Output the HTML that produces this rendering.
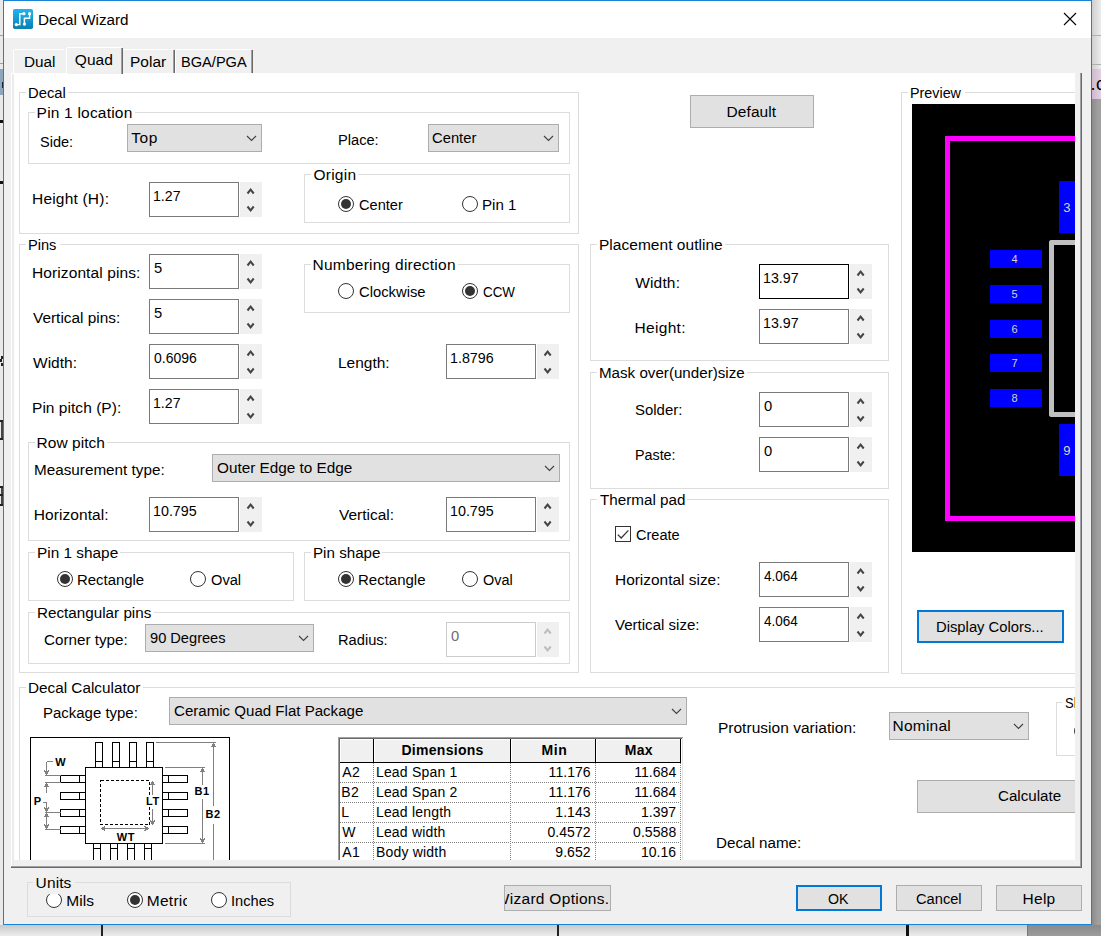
<!DOCTYPE html>
<html lang="en"><head><meta charset="utf-8"><title>Decal Wizard</title><style>
html,body{margin:0;padding:0;}
body{width:1101px;height:936px;overflow:hidden;position:relative;background:#fff;font-family:"Liberation Sans",sans-serif;}
div,span.t,svg.a{position:absolute;box-sizing:content-box;}
span.t{white-space:pre;display:block;transform-origin:0 0;}
.r{width:14px;height:14px;border:1px solid #333;border-radius:50%;background:#fff;}
.r i{position:absolute;left:2px;top:2px;width:10px;height:10px;border-radius:50%;background:#333;display:block;}
.cb{width:14px;height:14px;border:1px solid #333;background:#fff;}
.cb svg{position:absolute;left:0;top:0;}
</style></head>
<body>
<div style="left:0px;top:0px;width:4px;height:936px;background:#e9e9e9;"></div>
<div style="left:0px;top:35px;width:4px;height:1px;background:#a0a0a0;"></div>
<div style="left:0px;top:63px;width:4px;height:1px;background:#a0a0a0;"></div>
<div style="left:0px;top:69px;width:4px;height:26px;background:#8ea5be;"></div>
<div style="left:2px;top:82px;width:2px;height:6px;background:#1a2430;"></div>
<div style="left:0px;top:120px;width:4px;height:3px;background:#111;"></div>
<div style="left:0px;top:181px;width:4px;height:3px;background:#111;"></div>
<div style="left:1px;top:356px;width:2px;height:3px;background:#222;"></div>
<div style="left:0px;top:359px;width:2px;height:3px;background:#222;"></div>
<div style="left:1px;top:363px;width:2px;height:3px;background:#222;"></div>
<div style="left:0px;top:420px;width:3px;height:2px;background:#222;"></div>
<div style="left:1px;top:422px;width:2px;height:16px;background:#444;"></div>
<div style="left:0px;top:438px;width:3px;height:2px;background:#222;"></div>
<div style="left:0px;top:486px;width:3px;height:2px;background:#222;"></div>
<div style="left:1px;top:488px;width:2px;height:6px;background:#444;"></div>
<div style="left:0px;top:494px;width:3px;height:2px;background:#222;"></div>
<div style="left:1px;top:496px;width:2px;height:8px;background:#444;"></div>
<div style="left:0px;top:504px;width:3px;height:2px;background:#222;"></div>
<div style="left:1092px;top:0px;width:9px;height:936px;background:linear-gradient(90deg,#8c8c8c,#a0a0a0 70%);"></div>
<div style="left:1092px;top:0px;width:9px;height:35px;background:linear-gradient(90deg,#cfcfcf,#ededed);"></div>
<div style="left:1092px;top:35px;width:9px;height:29px;background:linear-gradient(90deg,#cfcfcf,#ededed);border-top:1px solid #b0b0b0;"></div>
<div style="left:1092px;top:64px;width:9px;height:4px;background:linear-gradient(90deg,#cfcfcf,#ededed);border-top:1px solid #b0b0b0;"></div>
<div style="left:1092px;top:69px;width:9px;height:30px;background:linear-gradient(90deg,#cdb9cd,#e4d2e4);"></div>
<span class="t" style="left:1090.4px;top:73px;font-size:18px;line-height:23px;color:#000;letter-spacing:0.5px;">.c</span>
<div style="left:0px;top:925px;width:1101px;height:11px;background:linear-gradient(180deg,#c9c9c9,#ececec);"></div>
<div style="left:1028px;top:925px;width:73px;height:11px;background:linear-gradient(180deg,#8a8a8a,#9c9c9c);"></div>
<div style="left:1027px;top:925px;width:1px;height:11px;background:#777;"></div>
<div style="left:101px;top:925px;width:2px;height:11px;background:#222;"></div>
<div style="left:557px;top:925px;width:2px;height:11px;background:#222;"></div>
<div style="left:906px;top:925px;width:3px;height:11px;background:#111;"></div>
<div style="left:3px;top:0px;width:1087px;height:923px;border:1px solid #1883d7;background:#f0f0f0;"></div>
<div style="left:4px;top:1px;width:1087px;height:37px;background:#fff;"></div>
<svg class="a" style="left:13px;top:9px" width="20" height="20" viewBox="0 0 20 20"><defs><linearGradient id="ig" x1="0" y1="0" x2="0" y2="1"><stop offset="0" stop-color="#1fb4f2"/><stop offset="1" stop-color="#0a80b0"/></linearGradient></defs><rect width="20" height="20" rx="1.8" fill="url(#ig)"/><path d="M3.3 15.6 H6.8 V4.7 H10.9 M11.4 15.1 V9.3 H16.6 V4.7" fill="none" stroke="#fff" stroke-width="1.45"/><circle cx="3.3" cy="15.6" r="1.6" fill="#fff"/><circle cx="10.9" cy="4.7" r="1.6" fill="#fff"/><circle cx="11.4" cy="15.1" r="1.6" fill="#fff"/><circle cx="16.6" cy="4.7" r="1.6" fill="#fff"/></svg>
<span class="t" style="left:38.0px;top:10px;font-size:15.5px;line-height:20px;color:#000;transform:scaleX(0.9829);">Decal Wizard</span>
<svg class="a" style="left:1063px;top:12px" width="14" height="14" viewBox="0 0 14 14"><path d="M1 1 L13 13 M13 1 L1 13" stroke="#000" stroke-width="1.1" fill="none"/></svg>
<div style="left:11px;top:73px;width:1071px;height:795px;background:#f0f0f0;"></div>
<div style="left:11px;top:73px;width:1064px;height:787px;background:#fff;"></div>
<div style="left:11px;top:73px;width:1px;height:793px;background:#fff;"></div>
<div style="left:12px;top:74px;width:2px;height:792px;background:#ebebeb;"></div>
<div style="left:1080px;top:73px;width:1px;height:795px;background:#a0a0a0;"></div>
<div style="left:1081px;top:73px;width:1px;height:795px;background:#696969;"></div>
<div style="left:11px;top:866px;width:1070px;height:1px;background:#a0a0a0;"></div>
<div style="left:11px;top:867px;width:1071px;height:1px;background:#696969;"></div>
<div style="left:13px;top:49px;width:53px;height:24px;background:#f0f0f0;"></div>
<div style="left:13px;top:50px;width:1px;height:23px;background:#fff;"></div>
<div style="left:14px;top:49px;width:50px;height:1px;background:#fff;"></div>
<span class="t" style="left:24.2px;top:52px;font-size:15.5px;line-height:20px;color:#000;transform:scaleX(0.9886);">Dual</span>
<div style="left:122px;top:49px;width:53px;height:24px;background:#f0f0f0;"></div>
<div style="left:123px;top:49px;width:50px;height:1px;background:#fff;"></div>
<div style="left:173px;top:50px;width:1px;height:23px;background:#a0a0a0;"></div>
<div style="left:174px;top:50px;width:1px;height:23px;background:#696969;"></div>
<span class="t" style="left:130.0px;top:52px;font-size:15.5px;line-height:20px;color:#000;transform:scaleX(0.9993);">Polar</span>
<div style="left:175px;top:49px;width:78px;height:24px;background:#f0f0f0;"></div>
<div style="left:175px;top:50px;width:1px;height:23px;background:#fff;"></div>
<div style="left:176px;top:49px;width:75px;height:1px;background:#fff;"></div>
<div style="left:251px;top:50px;width:1px;height:23px;background:#a0a0a0;"></div>
<div style="left:252px;top:50px;width:1px;height:23px;background:#696969;"></div>
<span class="t" style="left:180.7px;top:52px;font-size:15.5px;line-height:20px;color:#000;transform:scaleX(0.9418);">BGA/PGA</span>
<div style="left:66px;top:47px;width:57px;height:27px;background:#f0f0f0;"></div>
<div style="left:66px;top:48px;width:1px;height:26px;background:#fff;"></div>
<div style="left:67px;top:47px;width:54px;height:1px;background:#fff;"></div>
<div style="left:121px;top:48px;width:1px;height:26px;background:#a0a0a0;"></div>
<div style="left:122px;top:48px;width:1px;height:26px;background:#696969;"></div>
<span class="t" style="left:74.8px;top:50px;font-size:15.5px;line-height:20px;color:#000;letter-spacing:0.07px;">Quad</span>
<div id="pg" style="left:0;top:0;width:1075px;height:860px;overflow:hidden;">
<div style="left:19px;top:92px;width:558px;height:140px;border:1px solid #dcdcdc;"></div>
<div style="left:26px;top:84px;width:42.400000000000006px;height:16px;background:#fff;"></div>
<span class="t" style="left:28.0px;top:83px;font-size:15.5px;line-height:20px;color:#000;transform:scaleX(0.953);">Decal</span>
<div style="left:28px;top:112px;width:540px;height:50px;border:1px solid #dcdcdc;"></div>
<div style="left:34.6px;top:104px;width:100.0px;height:16px;background:#fff;"></div>
<span class="t" style="left:36.6px;top:103px;font-size:15.5px;line-height:20px;color:#000;letter-spacing:0.2px;">Pin 1 location</span>
<span class="t" style="left:39.5px;top:132px;font-size:15.5px;line-height:20px;color:#000;transform:scaleX(0.9372);">Side:</span>
<div style="left:127px;top:124px;width:133px;height:26px;border:1px solid #adadad;background:#e1e1e1;"></div>
<svg class="a" style="left:246px;top:135px" width="11" height="7" viewBox="0 0 11 7"><path d="M1 1 L5.5 5.5 L10 1" fill="none" stroke="#404040" stroke-width="1.1"/></svg>
<span class="t" style="left:131.2px;top:128px;font-size:15.5px;line-height:20px;color:#000;letter-spacing:0.56px;">Top</span>
<span class="t" style="left:337.8px;top:130px;font-size:15.5px;line-height:20px;color:#000;transform:scaleX(0.9439);">Place:</span>
<div style="left:428px;top:124px;width:129px;height:26px;border:1px solid #adadad;background:#e1e1e1;"></div>
<svg class="a" style="left:543px;top:135px" width="11" height="7" viewBox="0 0 11 7"><path d="M1 1 L5.5 5.5 L10 1" fill="none" stroke="#404040" stroke-width="1.1"/></svg>
<span class="t" style="left:432.4px;top:128px;font-size:15.5px;line-height:20px;color:#000;transform:scaleX(0.9532);">Center</span>
<span class="t" style="left:32.0px;top:189px;font-size:15.5px;line-height:20px;color:#000;letter-spacing:0.2px;">Height (H):</span>
<div style="left:149px;top:182px;width:88px;height:33px;border:1px solid #7a7a7a;background:#fff;"></div>
<div style="left:240px;top:182px;width:22px;height:35px;background:#f0f0f0;"></div>
<svg class="a" style="left:240px;top:182px" width="22" height="35" viewBox="0 0 22 35"><path d="M7.5 11.5 L10.6 7.7 L13.7 11.5" fill="none" stroke="#444" stroke-width="2"/><path d="M7.5 24.5 L10.6 28.3 L13.7 24.5" fill="none" stroke="#444" stroke-width="2"/></svg>
<span class="t" style="left:153.3px;top:186px;font-size:15.5px;line-height:20px;color:#000;transform:scaleX(0.912);">1.27</span>
<div style="left:304px;top:174px;width:264px;height:47px;border:1px solid #dcdcdc;"></div>
<div style="left:310.5px;top:166px;width:47.89999999999998px;height:16px;background:#fff;"></div>
<span class="t" style="left:313.5px;top:165px;font-size:15.5px;line-height:20px;color:#000;letter-spacing:0.23px;">Origin</span>
<div class="r" style="left:338px;top:196px;background:#fff"><i></i></div>
<span class="t" style="left:358.9px;top:195px;font-size:15.5px;line-height:20px;color:#000;transform:scaleX(0.9403);">Center</span>
<div class="r" style="left:462px;top:196px;background:#fff"></div>
<span class="t" style="left:482.3px;top:195px;font-size:15.5px;line-height:20px;color:#000;transform:scaleX(0.9756);">Pin 1</span>
<div style="left:19px;top:244px;width:558px;height:427px;border:1px solid #dcdcdc;"></div>
<div style="left:26px;top:236px;width:33.7px;height:16px;background:#fff;"></div>
<span class="t" style="left:28.1px;top:235px;font-size:15.5px;line-height:20px;color:#000;transform:scaleX(0.942);">Pins</span>
<span class="t" style="left:32.0px;top:263px;font-size:15.5px;line-height:20px;color:#000;letter-spacing:0.1px;">Horizontal pins:</span>
<div style="left:149px;top:254px;width:88px;height:33px;border:1px solid #7a7a7a;background:#fff;"></div>
<div style="left:240px;top:254px;width:22px;height:35px;background:#f0f0f0;"></div>
<svg class="a" style="left:240px;top:254px" width="22" height="35" viewBox="0 0 22 35"><path d="M7.5 11.5 L10.6 7.7 L13.7 11.5" fill="none" stroke="#444" stroke-width="2"/><path d="M7.5 24.5 L10.6 28.3 L13.7 24.5" fill="none" stroke="#444" stroke-width="2"/></svg>
<span class="t" style="left:154.2px;top:258px;font-size:15.5px;line-height:20px;color:#000;transform:scaleX(0.95);">5</span>
<span class="t" style="left:33.0px;top:308px;font-size:15.5px;line-height:20px;color:#000;transform:scaleX(0.9933);">Vertical pins:</span>
<div style="left:149px;top:299px;width:88px;height:33px;border:1px solid #7a7a7a;background:#fff;"></div>
<div style="left:240px;top:299px;width:22px;height:35px;background:#f0f0f0;"></div>
<svg class="a" style="left:240px;top:299px" width="22" height="35" viewBox="0 0 22 35"><path d="M7.5 11.5 L10.6 7.7 L13.7 11.5" fill="none" stroke="#444" stroke-width="2"/><path d="M7.5 24.5 L10.6 28.3 L13.7 24.5" fill="none" stroke="#444" stroke-width="2"/></svg>
<span class="t" style="left:154.2px;top:303px;font-size:15.5px;line-height:20px;color:#000;transform:scaleX(0.95);">5</span>
<span class="t" style="left:33.0px;top:353px;font-size:15.5px;line-height:20px;color:#000;letter-spacing:0.01px;">Width:</span>
<div style="left:149px;top:344px;width:88px;height:33px;border:1px solid #7a7a7a;background:#fff;"></div>
<div style="left:240px;top:344px;width:22px;height:35px;background:#f0f0f0;"></div>
<svg class="a" style="left:240px;top:344px" width="22" height="35" viewBox="0 0 22 35"><path d="M7.5 11.5 L10.6 7.7 L13.7 11.5" fill="none" stroke="#444" stroke-width="2"/><path d="M7.5 24.5 L10.6 28.3 L13.7 24.5" fill="none" stroke="#444" stroke-width="2"/></svg>
<span class="t" style="left:154.2px;top:348px;font-size:15.5px;line-height:20px;color:#000;transform:scaleX(0.9017);">0.6096</span>
<span class="t" style="left:32.0px;top:398px;font-size:15.5px;line-height:20px;color:#000;letter-spacing:0.04px;">Pin pitch (P):</span>
<div style="left:149px;top:389px;width:88px;height:33px;border:1px solid #7a7a7a;background:#fff;"></div>
<div style="left:240px;top:389px;width:22px;height:35px;background:#f0f0f0;"></div>
<svg class="a" style="left:240px;top:389px" width="22" height="35" viewBox="0 0 22 35"><path d="M7.5 11.5 L10.6 7.7 L13.7 11.5" fill="none" stroke="#444" stroke-width="2"/><path d="M7.5 24.5 L10.6 28.3 L13.7 24.5" fill="none" stroke="#444" stroke-width="2"/></svg>
<span class="t" style="left:153.3px;top:393px;font-size:15.5px;line-height:20px;color:#000;transform:scaleX(0.912);">1.27</span>
<div style="left:304px;top:264px;width:264px;height:47px;border:1px solid #dcdcdc;"></div>
<div style="left:310.5px;top:256px;width:147.39999999999998px;height:16px;background:#fff;"></div>
<span class="t" style="left:312.5px;top:255px;font-size:15.5px;line-height:20px;color:#000;letter-spacing:0.24px;">Numbering direction</span>
<div class="r" style="left:338px;top:283px;background:#fff"></div>
<span class="t" style="left:358.9px;top:282px;font-size:15.5px;line-height:20px;color:#000;transform:scaleX(0.9545);">Clockwise</span>
<div class="r" style="left:462px;top:283px;background:#fff"><i></i></div>
<span class="t" style="left:483.3px;top:282px;font-size:15.5px;line-height:20px;color:#000;transform:scaleX(0.8636);">CCW</span>
<span class="t" style="left:337.7px;top:353px;font-size:15.5px;line-height:20px;color:#000;transform:scaleX(0.9977);">Length:</span>
<div style="left:446px;top:344px;width:88px;height:33px;border:1px solid #7a7a7a;background:#fff;"></div>
<div style="left:537px;top:344px;width:22px;height:35px;background:#f0f0f0;"></div>
<svg class="a" style="left:537px;top:344px" width="22" height="35" viewBox="0 0 22 35"><path d="M7.5 11.5 L10.6 7.7 L13.7 11.5" fill="none" stroke="#444" stroke-width="2"/><path d="M7.5 24.5 L10.6 28.3 L13.7 24.5" fill="none" stroke="#444" stroke-width="2"/></svg>
<span class="t" style="left:450.3px;top:348px;font-size:15.5px;line-height:20px;color:#000;transform:scaleX(0.9214);">1.8796</span>
<div style="left:28px;top:442px;width:540px;height:97px;border:1px solid #dcdcdc;"></div>
<div style="left:34.6px;top:434px;width:72.80000000000001px;height:16px;background:#fff;"></div>
<span class="t" style="left:36.6px;top:433px;font-size:15.5px;line-height:20px;color:#000;letter-spacing:0.04px;">Row pitch</span>
<span class="t" style="left:33.8px;top:460px;font-size:15.5px;line-height:20px;color:#000;transform:scaleX(0.9848);">Measurement type:</span>
<div style="left:212px;top:454px;width:346px;height:26px;border:1px solid #adadad;background:#e1e1e1;"></div>
<svg class="a" style="left:544px;top:465px" width="11" height="7" viewBox="0 0 11 7"><path d="M1 1 L5.5 5.5 L10 1" fill="none" stroke="#404040" stroke-width="1.1"/></svg>
<span class="t" style="left:216.8px;top:458px;font-size:15.5px;line-height:20px;color:#000;transform:scaleX(0.9876);">Outer Edge to Edge</span>
<span class="t" style="left:33.8px;top:505px;font-size:15.5px;line-height:20px;color:#000;letter-spacing:0.06px;">Horizontal:</span>
<div style="left:149px;top:497px;width:88px;height:33px;border:1px solid #7a7a7a;background:#fff;"></div>
<div style="left:240px;top:497px;width:22px;height:35px;background:#f0f0f0;"></div>
<svg class="a" style="left:240px;top:497px" width="22" height="35" viewBox="0 0 22 35"><path d="M7.5 11.5 L10.6 7.7 L13.7 11.5" fill="none" stroke="#444" stroke-width="2"/><path d="M7.5 24.5 L10.6 28.3 L13.7 24.5" fill="none" stroke="#444" stroke-width="2"/></svg>
<span class="t" style="left:153.3px;top:501px;font-size:15.5px;line-height:20px;color:#000;transform:scaleX(0.9214);">10.795</span>
<span class="t" style="left:338.5px;top:505px;font-size:15.5px;line-height:20px;color:#000;transform:scaleX(0.9975);">Vertical:</span>
<div style="left:446px;top:497px;width:88px;height:33px;border:1px solid #7a7a7a;background:#fff;"></div>
<div style="left:537px;top:497px;width:22px;height:35px;background:#f0f0f0;"></div>
<svg class="a" style="left:537px;top:497px" width="22" height="35" viewBox="0 0 22 35"><path d="M7.5 11.5 L10.6 7.7 L13.7 11.5" fill="none" stroke="#444" stroke-width="2"/><path d="M7.5 24.5 L10.6 28.3 L13.7 24.5" fill="none" stroke="#444" stroke-width="2"/></svg>
<span class="t" style="left:450.3px;top:501px;font-size:15.5px;line-height:20px;color:#000;transform:scaleX(0.9214);">10.795</span>
<div style="left:28px;top:552px;width:264px;height:47px;border:1px solid #dcdcdc;"></div>
<div style="left:34.6px;top:544px;width:85.6px;height:16px;background:#fff;"></div>
<span class="t" style="left:36.6px;top:543px;font-size:15.5px;line-height:20px;color:#000;transform:scaleX(0.9918);">Pin 1 shape</span>
<div class="r" style="left:57px;top:571px;background:#fff"><i></i></div>
<span class="t" style="left:77.0px;top:570px;font-size:15.5px;line-height:20px;color:#000;transform:scaleX(0.9622);">Rectangle</span>
<div class="r" style="left:190px;top:571px;background:#fff"></div>
<span class="t" style="left:210.6px;top:570px;font-size:15.5px;line-height:20px;color:#000;transform:scaleX(0.9449);">Oval</span>
<div style="left:304px;top:552px;width:264px;height:47px;border:1px solid #dcdcdc;"></div>
<div style="left:310.5px;top:544px;width:71.89999999999998px;height:16px;background:#fff;"></div>
<span class="t" style="left:312.5px;top:543px;font-size:15.5px;line-height:20px;color:#000;transform:scaleX(0.9787);">Pin shape</span>
<div class="r" style="left:338px;top:571px;background:#fff"><i></i></div>
<span class="t" style="left:358.0px;top:570px;font-size:15.5px;line-height:20px;color:#000;transform:scaleX(0.9666);">Rectangle</span>
<div class="r" style="left:462px;top:571px;background:#fff"></div>
<span class="t" style="left:483.3px;top:570px;font-size:15.5px;line-height:20px;color:#000;transform:scaleX(0.9322);">Oval</span>
<div style="left:28px;top:612px;width:540px;height:50px;border:1px solid #dcdcdc;"></div>
<div style="left:34.6px;top:604px;width:119.6px;height:16px;background:#fff;"></div>
<span class="t" style="left:36.6px;top:603px;font-size:15.5px;line-height:20px;color:#000;transform:scaleX(0.9829);">Rectangular pins</span>
<span class="t" style="left:43.8px;top:630px;font-size:15.5px;line-height:20px;color:#000;transform:scaleX(0.9811);">Corner type:</span>
<div style="left:145px;top:624px;width:167px;height:26px;border:1px solid #adadad;background:#e1e1e1;"></div>
<svg class="a" style="left:298px;top:635px" width="11" height="7" viewBox="0 0 11 7"><path d="M1 1 L5.5 5.5 L10 1" fill="none" stroke="#404040" stroke-width="1.1"/></svg>
<span class="t" style="left:149.5px;top:628px;font-size:15.5px;line-height:20px;color:#000;transform:scaleX(0.9429);">90 Degrees</span>
<span class="t" style="left:337.8px;top:630px;font-size:15.5px;line-height:20px;color:#000;transform:scaleX(0.9452);">Radius:</span>
<div style="left:446px;top:622px;width:88px;height:33px;border:1px solid #ccc;background:#fff;"></div>
<div style="left:537px;top:622px;width:22px;height:35px;background:#f0f0f0;"></div>
<svg class="a" style="left:537px;top:622px" width="22" height="35" viewBox="0 0 22 35"><path d="M7.5 11.5 L10.6 7.7 L13.7 11.5" fill="none" stroke="#bdbdbd" stroke-width="2"/><path d="M7.5 24.5 L10.6 28.3 L13.7 24.5" fill="none" stroke="#bdbdbd" stroke-width="2"/></svg>
<span class="t" style="left:451.2px;top:626px;font-size:15.5px;line-height:20px;color:#6d6d6d;transform:scaleX(0.95);">0</span>
<div style="left:690px;top:95px;width:122px;height:31px;border:1px solid #adadad;background:#e1e1e1;"></div>
<span class="t" style="left:726.6px;top:102px;font-size:15.5px;line-height:20px;color:#000;letter-spacing:0.06px;">Default</span>
<div style="left:590px;top:244px;width:297px;height:115px;border:1px solid #dcdcdc;"></div>
<div style="left:597px;top:236px;width:128px;height:16px;background:#fff;"></div>
<span class="t" style="left:599.0px;top:235px;font-size:15.5px;line-height:20px;color:#000;letter-spacing:0.03px;">Placement outline</span>
<span class="t" style="left:635.2px;top:273px;font-size:15.5px;line-height:20px;color:#000;letter-spacing:0.17px;">Width:</span>
<div style="left:759px;top:264px;width:88px;height:33px;border:1px solid #000;background:#fff;"></div>
<div style="left:850px;top:264px;width:22px;height:35px;background:#f0f0f0;"></div>
<svg class="a" style="left:850px;top:264px" width="22" height="35" viewBox="0 0 22 35"><path d="M7.5 11.5 L10.6 7.7 L13.7 11.5" fill="none" stroke="#444" stroke-width="2"/><path d="M7.5 24.5 L10.6 28.3 L13.7 24.5" fill="none" stroke="#444" stroke-width="2"/></svg>
<span class="t" style="left:763.3px;top:268px;font-size:15.5px;line-height:20px;color:#000;transform:scaleX(0.9178);">13.97</span>
<span class="t" style="left:634.6px;top:318px;font-size:15.5px;line-height:20px;color:#000;letter-spacing:0.3px;">Height:</span>
<div style="left:759px;top:309px;width:88px;height:33px;border:1px solid #7a7a7a;background:#fff;"></div>
<div style="left:850px;top:309px;width:22px;height:35px;background:#f0f0f0;"></div>
<svg class="a" style="left:850px;top:309px" width="22" height="35" viewBox="0 0 22 35"><path d="M7.5 11.5 L10.6 7.7 L13.7 11.5" fill="none" stroke="#444" stroke-width="2"/><path d="M7.5 24.5 L10.6 28.3 L13.7 24.5" fill="none" stroke="#444" stroke-width="2"/></svg>
<span class="t" style="left:763.3px;top:313px;font-size:15.5px;line-height:20px;color:#000;transform:scaleX(0.9178);">13.97</span>
<div style="left:590px;top:372px;width:297px;height:115px;border:1px solid #dcdcdc;"></div>
<div style="left:597px;top:364px;width:150.10000000000002px;height:16px;background:#fff;"></div>
<span class="t" style="left:599.0px;top:363px;font-size:15.5px;line-height:20px;color:#000;transform:scaleX(0.9775);">Mask over(under)size</span>
<span class="t" style="left:635.4px;top:400px;font-size:15.5px;line-height:20px;color:#000;transform:scaleX(0.9641);">Solder:</span>
<div style="left:759px;top:392px;width:88px;height:33px;border:1px solid #7a7a7a;background:#fff;"></div>
<div style="left:850px;top:392px;width:22px;height:35px;background:#f0f0f0;"></div>
<svg class="a" style="left:850px;top:392px" width="22" height="35" viewBox="0 0 22 35"><path d="M7.5 11.5 L10.6 7.7 L13.7 11.5" fill="none" stroke="#444" stroke-width="2"/><path d="M7.5 24.5 L10.6 28.3 L13.7 24.5" fill="none" stroke="#444" stroke-width="2"/></svg>
<span class="t" style="left:764.2px;top:396px;font-size:15.5px;line-height:20px;color:#000;transform:scaleX(0.95);">0</span>
<span class="t" style="left:634.7px;top:445px;font-size:15.5px;line-height:20px;color:#000;transform:scaleX(0.922);">Paste:</span>
<div style="left:759px;top:437px;width:88px;height:33px;border:1px solid #7a7a7a;background:#fff;"></div>
<div style="left:850px;top:437px;width:22px;height:35px;background:#f0f0f0;"></div>
<svg class="a" style="left:850px;top:437px" width="22" height="35" viewBox="0 0 22 35"><path d="M7.5 11.5 L10.6 7.7 L13.7 11.5" fill="none" stroke="#444" stroke-width="2"/><path d="M7.5 24.5 L10.6 28.3 L13.7 24.5" fill="none" stroke="#444" stroke-width="2"/></svg>
<span class="t" style="left:764.2px;top:441px;font-size:15.5px;line-height:20px;color:#000;transform:scaleX(0.95);">0</span>
<div style="left:590px;top:499px;width:297px;height:172px;border:1px solid #dcdcdc;"></div>
<div style="left:596.5px;top:491px;width:90.79999999999995px;height:16px;background:#fff;"></div>
<span class="t" style="left:599.5px;top:490px;font-size:15.5px;line-height:20px;color:#000;transform:scaleX(0.9815);">Thermal pad</span>
<div class="cb" style="left:615px;top:526px"><svg width="14" height="14" viewBox="0 0 14 14"><path d="M1.8 7.6 L5.2 11 L12.4 3.4" fill="none" stroke="#333" stroke-width="1.3"/></svg></div>
<span class="t" style="left:635.9px;top:525px;font-size:15.5px;line-height:20px;color:#000;transform:scaleX(0.9388);">Create</span>
<span class="t" style="left:614.6px;top:570px;font-size:15.5px;line-height:20px;color:#000;transform:scaleX(0.9955);">Horizontal size:</span>
<div style="left:759px;top:562px;width:88px;height:33px;border:1px solid #7a7a7a;background:#fff;"></div>
<div style="left:850px;top:562px;width:22px;height:35px;background:#f0f0f0;"></div>
<svg class="a" style="left:850px;top:562px" width="22" height="35" viewBox="0 0 22 35"><path d="M7.5 11.5 L10.6 7.7 L13.7 11.5" fill="none" stroke="#444" stroke-width="2"/><path d="M7.5 24.5 L10.6 28.3 L13.7 24.5" fill="none" stroke="#444" stroke-width="2"/></svg>
<span class="t" style="left:764.2px;top:566px;font-size:15.5px;line-height:20px;color:#000;transform:scaleX(0.8709);">4.064</span>
<span class="t" style="left:615.4px;top:615px;font-size:15.5px;line-height:20px;color:#000;transform:scaleX(0.9707);">Vertical size:</span>
<div style="left:759px;top:607px;width:88px;height:33px;border:1px solid #7a7a7a;background:#fff;"></div>
<div style="left:850px;top:607px;width:22px;height:35px;background:#f0f0f0;"></div>
<svg class="a" style="left:850px;top:607px" width="22" height="35" viewBox="0 0 22 35"><path d="M7.5 11.5 L10.6 7.7 L13.7 11.5" fill="none" stroke="#444" stroke-width="2"/><path d="M7.5 24.5 L10.6 28.3 L13.7 24.5" fill="none" stroke="#444" stroke-width="2"/></svg>
<span class="t" style="left:764.2px;top:611px;font-size:15.5px;line-height:20px;color:#000;transform:scaleX(0.8709);">4.064</span>
<div style="left:901px;top:92px;width:198px;height:580px;border:1px solid #dcdcdc;"></div>
<div style="left:908px;top:84px;width:56.799999999999955px;height:16px;background:#fff;"></div>
<span class="t" style="left:910.1px;top:83px;font-size:15.5px;line-height:20px;color:#000;transform:scaleX(0.9245);">Preview</span>
<div style="left:912px;top:104px;width:170px;height:448px;background:#000;"></div>
<div style="left:945px;top:136px;width:140px;height:375px;border:5px solid #f0f;border-right:none;"></div>
<div style="left:1049px;top:240px;width:40px;height:167px;border:5px solid #c0c0c0;border-right:none;border-radius:3px 0 0 3px;"></div>
<div style="left:1059px;top:181px;width:20px;height:52px;background:#00f;"></div>
<div style="left:1059px;top:424px;width:20px;height:52px;background:#00f;"></div>
<div style="left:990px;top:250px;width:52px;height:18px;background:#00f;"></div>
<span class="t" style="left:1011.5px;top:251.5px;font-size:11px;line-height:14px;color:#d6d6c4;font-family:"DejaVu Sans Mono","Liberation Mono",monospace;">4</span>
<div style="left:990px;top:285px;width:52px;height:18px;background:#00f;"></div>
<span class="t" style="left:1011.5px;top:286.5px;font-size:11px;line-height:14px;color:#d6d6c4;font-family:"DejaVu Sans Mono","Liberation Mono",monospace;">5</span>
<div style="left:990px;top:320px;width:52px;height:18px;background:#00f;"></div>
<span class="t" style="left:1011.5px;top:321.5px;font-size:11px;line-height:14px;color:#d6d6c4;font-family:"DejaVu Sans Mono","Liberation Mono",monospace;">6</span>
<div style="left:990px;top:354px;width:52px;height:18px;background:#00f;"></div>
<span class="t" style="left:1011.5px;top:355.5px;font-size:11px;line-height:14px;color:#d6d6c4;font-family:"DejaVu Sans Mono","Liberation Mono",monospace;">7</span>
<div style="left:990px;top:389px;width:52px;height:18px;background:#00f;"></div>
<span class="t" style="left:1011.5px;top:390.5px;font-size:11px;line-height:14px;color:#d6d6c4;font-family:"DejaVu Sans Mono","Liberation Mono",monospace;">8</span>
<span class="t" style="left:1063.2px;top:200px;font-size:13px;line-height:15px;color:#d6d6c4;font-family:"DejaVu Sans Mono","Liberation Mono",monospace;">3</span>
<span class="t" style="left:1063.2px;top:443px;font-size:13px;line-height:15px;color:#d6d6c4;font-family:"DejaVu Sans Mono","Liberation Mono",monospace;">9</span>
<div style="left:917px;top:610px;width:143px;height:29px;border:2px solid #0078d7;background:#e1e1e1;"></div>
<span class="t" style="left:936.4px;top:617px;font-size:15.5px;line-height:20px;color:#000;transform:scaleX(0.9544);">Display Colors...</span>
<div style="left:19px;top:687px;width:1098px;height:198px;border:1px solid #dcdcdc;"></div>
<div style="left:25.8px;top:679px;width:117.10000000000001px;height:16px;background:#fff;"></div>
<span class="t" style="left:27.8px;top:678px;font-size:15.5px;line-height:20px;color:#000;transform:scaleX(0.9871);">Decal Calculator</span>
<span class="t" style="left:43.2px;top:703px;font-size:15.5px;line-height:20px;color:#000;transform:scaleX(0.9653);">Package type:</span>
<div style="left:169px;top:697px;width:516px;height:26px;border:1px solid #adadad;background:#e1e1e1;"></div>
<svg class="a" style="left:671px;top:708px" width="11" height="7" viewBox="0 0 11 7"><path d="M1 1 L5.5 5.5 L10 1" fill="none" stroke="#404040" stroke-width="1.1"/></svg>
<span class="t" style="left:173.8px;top:701px;font-size:15.5px;line-height:20px;color:#000;transform:scaleX(0.9723);">Ceramic Quad Flat Package</span>
<span class="t" style="left:717.9px;top:718px;font-size:15.5px;line-height:20px;color:#000;letter-spacing:0.03px;">Protrusion variation:</span>
<div style="left:889px;top:712px;width:138px;height:26px;border:1px solid #adadad;background:#e1e1e1;"></div>
<svg class="a" style="left:1013px;top:723px" width="11" height="7" viewBox="0 0 11 7"><path d="M1 1 L5.5 5.5 L10 1" fill="none" stroke="#404040" stroke-width="1.1"/></svg>
<span class="t" style="left:892.6px;top:716px;font-size:15.5px;line-height:20px;color:#000;letter-spacing:0.2px;">Nominal</span>
<div style="left:1056px;top:702px;width:58px;height:52px;border:1px solid #dcdcdc;"></div>
<div style="left:1062.2px;top:694px;width:16.399999999999864px;height:16px;background:#fff;"></div>
<span class="t" style="left:1065.2px;top:693px;font-size:15.5px;line-height:20px;color:#000;transform:scaleX(0.84);">Sl</span>
<div class="r" style="left:1073.6px;top:723px"></div>
<div style="left:917px;top:780px;width:198px;height:31px;border:1px solid #adadad;background:#e1e1e1;"></div>
<span class="t" style="left:998.2px;top:786px;font-size:15.5px;line-height:20px;color:#000;transform:scaleX(0.9765);">Calculate</span>
<span class="t" style="left:716.1px;top:833px;font-size:15.5px;line-height:20px;color:#000;transform:scaleX(0.9798);">Decal name:</span>
<svg class="a" shape-rendering="crispEdges" style="left:30px;top:737px" width="201" height="150" viewBox="0 0 201 150"><rect x="0.5" y="0.5" width="199" height="140" fill="#fff" stroke="#000" stroke-width="1" /><rect x="65.5" y="5.5" width="7" height="25" fill="#fff" stroke="#000" stroke-width="1" /><line x1="65.5" y1="24.5" x2="72.5" y2="24.5" stroke="#000" stroke-width="1"/><rect x="82.5" y="5.5" width="7" height="25" fill="#fff" stroke="#000" stroke-width="1" /><line x1="82.5" y1="24.5" x2="89.5" y2="24.5" stroke="#000" stroke-width="1"/><rect x="99.5" y="5.5" width="7" height="25" fill="#fff" stroke="#000" stroke-width="1" /><line x1="99.5" y1="24.5" x2="106.5" y2="24.5" stroke="#000" stroke-width="1"/><rect x="116.5" y="5.5" width="7" height="25" fill="#fff" stroke="#000" stroke-width="1" /><line x1="116.5" y1="24.5" x2="123.5" y2="24.5" stroke="#000" stroke-width="1"/><rect x="63.5" y="106.5" width="7" height="30" fill="#fff" stroke="#000" stroke-width="1" /><line x1="63.5" y1="111.5" x2="70.5" y2="111.5" stroke="#000" stroke-width="1"/><rect x="80.5" y="106.5" width="7" height="30" fill="#fff" stroke="#000" stroke-width="1" /><line x1="80.5" y1="111.5" x2="87.5" y2="111.5" stroke="#000" stroke-width="1"/><rect x="97.5" y="106.5" width="7" height="30" fill="#fff" stroke="#000" stroke-width="1" /><line x1="97.5" y1="111.5" x2="104.5" y2="111.5" stroke="#000" stroke-width="1"/><rect x="114.5" y="106.5" width="7" height="30" fill="#fff" stroke="#000" stroke-width="1" /><line x1="114.5" y1="111.5" x2="121.5" y2="111.5" stroke="#000" stroke-width="1"/><rect x="30.5" y="38.5" width="25" height="7" fill="#fff" stroke="#000" stroke-width="1" /><line x1="49.5" y1="38.5" x2="49.5" y2="45.5" stroke="#000" stroke-width="1"/><rect x="30.5" y="55.5" width="25" height="7" fill="#fff" stroke="#000" stroke-width="1" /><line x1="49.5" y1="55.5" x2="49.5" y2="62.5" stroke="#000" stroke-width="1"/><rect x="30.5" y="72.5" width="25" height="7" fill="#fff" stroke="#000" stroke-width="1" /><line x1="49.5" y1="72.5" x2="49.5" y2="79.5" stroke="#000" stroke-width="1"/><rect x="30.5" y="89.5" width="25" height="7" fill="#fff" stroke="#000" stroke-width="1" /><line x1="49.5" y1="89.5" x2="49.5" y2="96.5" stroke="#000" stroke-width="1"/><rect x="132.5" y="38.5" width="25" height="7" fill="#fff" stroke="#000" stroke-width="1" /><line x1="138.5" y1="38.5" x2="138.5" y2="45.5" stroke="#000" stroke-width="1"/><rect x="132.5" y="55.5" width="25" height="7" fill="#fff" stroke="#000" stroke-width="1" /><line x1="138.5" y1="55.5" x2="138.5" y2="62.5" stroke="#000" stroke-width="1"/><rect x="132.5" y="72.5" width="25" height="7" fill="#fff" stroke="#000" stroke-width="1" /><line x1="138.5" y1="72.5" x2="138.5" y2="79.5" stroke="#000" stroke-width="1"/><rect x="132.5" y="89.5" width="25" height="7" fill="#fff" stroke="#000" stroke-width="1" /><line x1="138.5" y1="89.5" x2="138.5" y2="96.5" stroke="#000" stroke-width="1"/><rect x="55.5" y="30.5" width="77" height="76" fill="#fff" stroke="#000" stroke-width="1" /><rect x="70.5" y="43.5" width="49" height="44" fill="none" stroke="#000" stroke-width="1" stroke-dasharray="3 2"/><line x1="22.5" y1="24.5" x2="16.5" y2="24.5" stroke="#808080" stroke-width="1"/><line x1="16.5" y1="24.5" x2="16.5" y2="37.5" stroke="#808080" stroke-width="1"/><line x1="16.5" y1="37.5" x2="14.5" y2="33.5" stroke="#808080" stroke-width="1"/><line x1="16.5" y1="37.5" x2="18.5" y2="33.5" stroke="#808080" stroke-width="1"/><line x1="14.5" y1="38.5" x2="30.5" y2="38.5" stroke="#808080" stroke-width="1"/><line x1="14.5" y1="45.5" x2="30.5" y2="45.5" stroke="#808080" stroke-width="1"/><line x1="16.5" y1="46.5" x2="16.5" y2="55.5" stroke="#808080" stroke-width="1"/><line x1="16.5" y1="46.5" x2="14.5" y2="50.5" stroke="#808080" stroke-width="1"/><line x1="16.5" y1="46.5" x2="18.5" y2="50.5" stroke="#808080" stroke-width="1"/><line x1="12.5" y1="65.5" x2="16.5" y2="65.5" stroke="#808080" stroke-width="1"/><line x1="16.5" y1="65.5" x2="16.5" y2="92.5" stroke="#808080" stroke-width="1"/><line x1="14.5" y1="75.5" x2="30.5" y2="75.5" stroke="#808080" stroke-width="1"/><line x1="14.5" y1="92.5" x2="30.5" y2="92.5" stroke="#808080" stroke-width="1"/><line x1="16.5" y1="74.5" x2="14.5" y2="70.5" stroke="#808080" stroke-width="1"/><line x1="16.5" y1="74.5" x2="18.5" y2="70.5" stroke="#808080" stroke-width="1"/><line x1="16.5" y1="76.5" x2="14.5" y2="80.5" stroke="#808080" stroke-width="1"/><line x1="16.5" y1="76.5" x2="18.5" y2="80.5" stroke="#808080" stroke-width="1"/><line x1="16.5" y1="91.5" x2="14.5" y2="87.5" stroke="#808080" stroke-width="1"/><line x1="16.5" y1="91.5" x2="18.5" y2="87.5" stroke="#808080" stroke-width="1"/><line x1="122.5" y1="44.5" x2="122.5" y2="57.5" stroke="#808080" stroke-width="1"/><line x1="122.5" y1="44.5" x2="120.5" y2="48.5" stroke="#808080" stroke-width="1"/><line x1="122.5" y1="44.5" x2="124.5" y2="48.5" stroke="#808080" stroke-width="1"/><line x1="122.5" y1="71.5" x2="122.5" y2="87.5" stroke="#808080" stroke-width="1"/><line x1="122.5" y1="87.5" x2="120.5" y2="83.5" stroke="#808080" stroke-width="1"/><line x1="122.5" y1="87.5" x2="124.5" y2="83.5" stroke="#808080" stroke-width="1"/><line x1="71.5" y1="91.5" x2="118.5" y2="91.5" stroke="#808080" stroke-width="1"/><line x1="71.5" y1="91.5" x2="75.5" y2="89.5" stroke="#808080" stroke-width="1"/><line x1="71.5" y1="91.5" x2="75.5" y2="93.5" stroke="#808080" stroke-width="1"/><line x1="118.5" y1="91.5" x2="114.5" y2="89.5" stroke="#808080" stroke-width="1"/><line x1="118.5" y1="91.5" x2="114.5" y2="93.5" stroke="#808080" stroke-width="1"/><line x1="134.5" y1="30.5" x2="174.5" y2="30.5" stroke="#808080" stroke-width="1"/><line x1="134.5" y1="106.5" x2="174.5" y2="106.5" stroke="#808080" stroke-width="1"/><line x1="172.5" y1="31.5" x2="172.5" y2="47.5" stroke="#808080" stroke-width="1"/><line x1="172.5" y1="31.5" x2="170.5" y2="35.5" stroke="#808080" stroke-width="1"/><line x1="172.5" y1="31.5" x2="174.5" y2="35.5" stroke="#808080" stroke-width="1"/><line x1="172.5" y1="61.5" x2="172.5" y2="105.5" stroke="#808080" stroke-width="1"/><line x1="172.5" y1="105.5" x2="170.5" y2="101.5" stroke="#808080" stroke-width="1"/><line x1="172.5" y1="105.5" x2="174.5" y2="101.5" stroke="#808080" stroke-width="1"/><line x1="125.5" y1="5.5" x2="185.5" y2="5.5" stroke="#808080" stroke-width="1"/><line x1="183.5" y1="6.5" x2="183.5" y2="68.5" stroke="#808080" stroke-width="1"/><line x1="183.5" y1="6.5" x2="181.5" y2="10.5" stroke="#808080" stroke-width="1"/><line x1="183.5" y1="6.5" x2="185.5" y2="10.5" stroke="#808080" stroke-width="1"/><line x1="183.5" y1="86.5" x2="183.5" y2="143.5" stroke="#808080" stroke-width="1"/><rect x="115" y="59" width="15" height="11" fill="#fff"/><text x="25.299999999999997" y="29" style="font-family:'Liberation Sans',sans-serif;font-weight:bold;font-size:11px;letter-spacing:0px">W</text><text x="3.799999999999997" y="68.39999999999998" style="font-family:'Liberation Sans',sans-serif;font-weight:bold;font-size:11px;letter-spacing:0px">P</text><text x="116" y="68.39999999999998" style="font-family:'Liberation Sans',sans-serif;font-weight:bold;font-size:11px;letter-spacing:0.6px">LT</text><text x="86.8" y="103.60000000000002" style="font-family:'Liberation Sans',sans-serif;font-weight:bold;font-size:11px;letter-spacing:0.6px">WT</text><text x="164.5" y="58.39999999999998" style="font-family:'Liberation Sans',sans-serif;font-weight:bold;font-size:11px;letter-spacing:0.6px">B1</text><text x="175.4" y="80.5" style="font-family:'Liberation Sans',sans-serif;font-weight:bold;font-size:11px;letter-spacing:0.6px">B2</text></svg>
<div style="left:338px;top:737px;width:346px;height:140px;background:#fff;"></div>
<div style="left:338px;top:737px;width:345px;height:1px;background:#a0a0a0;"></div>
<div style="left:338px;top:737px;width:1px;height:140px;background:#a0a0a0;"></div>
<div style="left:339px;top:738px;width:343px;height:1px;background:#696969;"></div>
<div style="left:339px;top:738px;width:1px;height:140px;background:#696969;"></div>
<div style="left:682px;top:738px;width:1px;height:140px;background:#e3e3e3;"></div>
<div style="left:340px;top:739px;width:33px;height:23px;background:#f0f0f0;"></div>
<div style="left:340px;top:739px;width:33px;height:1px;background:#fff;"></div>
<div style="left:340px;top:739px;width:1px;height:23px;background:#fff;"></div>
<div style="left:373px;top:739px;width:1px;height:24px;background:#000;"></div>
<div style="left:374px;top:739px;width:136px;height:23px;background:#f0f0f0;"></div>
<div style="left:374px;top:739px;width:136px;height:1px;background:#fff;"></div>
<div style="left:374px;top:739px;width:1px;height:23px;background:#fff;"></div>
<div style="left:510px;top:739px;width:1px;height:24px;background:#000;"></div>
<div style="left:511px;top:739px;width:84px;height:23px;background:#f0f0f0;"></div>
<div style="left:511px;top:739px;width:84px;height:1px;background:#fff;"></div>
<div style="left:511px;top:739px;width:1px;height:23px;background:#fff;"></div>
<div style="left:595px;top:739px;width:1px;height:24px;background:#000;"></div>
<div style="left:596px;top:739px;width:84px;height:23px;background:#f0f0f0;"></div>
<div style="left:596px;top:739px;width:84px;height:1px;background:#fff;"></div>
<div style="left:596px;top:739px;width:1px;height:23px;background:#fff;"></div>
<div style="left:680px;top:739px;width:1px;height:24px;background:#000;"></div>
<div style="left:340px;top:762px;width:341px;height:1px;background:#000;"></div>
<span class="t" style="left:401.4px;top:741px;font-size:14px;line-height:19px;color:#000;letter-spacing:0.29px;font-weight:bold;">Dimensions</span>
<span class="t" style="left:541.4px;top:741px;font-size:14px;line-height:19px;color:#000;letter-spacing:0.62px;font-weight:bold;">Min</span>
<span class="t" style="left:624.8px;top:741px;font-size:14px;line-height:19px;color:#000;letter-spacing:0.28px;font-weight:bold;">Max</span>
<span class="t" style="left:342.3px;top:763px;font-size:14px;line-height:19px;color:#000;letter-spacing:0.3px;">A2</span>
<span class="t" style="left:375.9px;top:763px;font-size:14px;line-height:19px;color:#000;letter-spacing:0.2px;">Lead Span 1</span>
<span class="t" style="left:548.6px;top:763px;font-size:14px;line-height:19px;color:#000;letter-spacing:0.05px;">11.176</span>
<span class="t" style="left:634.2px;top:763px;font-size:14px;line-height:19px;color:#000;letter-spacing:0.05px;">11.684</span>
<div style="left:340px;top:782px;width:341px;height:1px;background:repeating-linear-gradient(90deg,#808080 0 1px,#fff 1px 2px);"></div>
<span class="t" style="left:341.3px;top:783px;font-size:14px;line-height:19px;color:#000;letter-spacing:0.3px;">B2</span>
<span class="t" style="left:375.9px;top:783px;font-size:14px;line-height:19px;color:#000;letter-spacing:0.2px;">Lead Span 2</span>
<span class="t" style="left:548.6px;top:783px;font-size:14px;line-height:19px;color:#000;letter-spacing:0.05px;">11.176</span>
<span class="t" style="left:634.2px;top:783px;font-size:14px;line-height:19px;color:#000;letter-spacing:0.05px;">11.684</span>
<div style="left:340px;top:802px;width:341px;height:1px;background:repeating-linear-gradient(90deg,#808080 0 1px,#fff 1px 2px);"></div>
<span class="t" style="left:341.3px;top:803px;font-size:14px;line-height:19px;color:#000;letter-spacing:0.3px;">L</span>
<span class="t" style="left:375.9px;top:803px;font-size:14px;line-height:19px;color:#000;letter-spacing:0.2px;">Lead length</span>
<span class="t" style="left:555.3px;top:803px;font-size:14px;line-height:19px;color:#000;letter-spacing:0.05px;">1.143</span>
<span class="t" style="left:640.9px;top:803px;font-size:14px;line-height:19px;color:#000;letter-spacing:0.05px;">1.397</span>
<div style="left:340px;top:822px;width:341px;height:1px;background:repeating-linear-gradient(90deg,#808080 0 1px,#fff 1px 2px);"></div>
<span class="t" style="left:342.3px;top:823px;font-size:14px;line-height:19px;color:#000;letter-spacing:0.3px;">W</span>
<span class="t" style="left:375.9px;top:823px;font-size:14px;line-height:19px;color:#000;letter-spacing:0.2px;">Lead width</span>
<span class="t" style="left:547.5px;top:823px;font-size:14px;line-height:19px;color:#000;letter-spacing:0.05px;">0.4572</span>
<span class="t" style="left:633.1px;top:823px;font-size:14px;line-height:19px;color:#000;letter-spacing:0.05px;">0.5588</span>
<div style="left:340px;top:842px;width:341px;height:1px;background:repeating-linear-gradient(90deg,#808080 0 1px,#fff 1px 2px);"></div>
<span class="t" style="left:342.3px;top:843px;font-size:14px;line-height:19px;color:#000;letter-spacing:0.3px;">A1</span>
<span class="t" style="left:375.9px;top:843px;font-size:14px;line-height:19px;color:#000;letter-spacing:0.2px;">Body width</span>
<span class="t" style="left:555.3px;top:843px;font-size:14px;line-height:19px;color:#000;letter-spacing:0.05px;">9.652</span>
<span class="t" style="left:640.9px;top:843px;font-size:14px;line-height:19px;color:#000;letter-spacing:0.05px;">10.16</span>
<div style="left:340px;top:862px;width:341px;height:1px;background:repeating-linear-gradient(90deg,#808080 0 1px,#fff 1px 2px);"></div>
<div style="left:373px;top:763px;width:1px;height:110px;background:repeating-linear-gradient(180deg,#808080 0 1px,#fff 1px 2px);"></div>
<div style="left:510px;top:763px;width:1px;height:110px;background:repeating-linear-gradient(180deg,#808080 0 1px,#fff 1px 2px);"></div>
<div style="left:595px;top:763px;width:1px;height:110px;background:repeating-linear-gradient(180deg,#808080 0 1px,#fff 1px 2px);"></div>
<div style="left:680px;top:763px;width:1px;height:110px;background:repeating-linear-gradient(180deg,#808080 0 1px,#fff 1px 2px);"></div>
</div>
<div style="left:27px;top:882px;width:262px;height:33px;border:1px solid #dcdcdc;"></div>
<div style="left:33px;top:874px;width:42px;height:18px;background:#f0f0f0;"></div>
<div class="r" style="left:46px;top:892px;background:#fff"></div>
<span class="t" style="left:66.2px;top:891px;font-size:15.5px;line-height:20px;color:#000;letter-spacing:0.06px;">Mils</span>
<div class="r" style="left:127px;top:892px;background:#fff"><i></i></div>
<span class="t" style="left:146.8px;top:891px;font-size:15.5px;line-height:20px;color:#000;letter-spacing:0.25px;width:40.7px;overflow:hidden;">Metric</span>
<div class="r" style="left:211px;top:892px;background:#fff"></div>
<span class="t" style="left:230.9px;top:891px;font-size:15.5px;line-height:20px;color:#000;transform:scaleX(0.9439);">Inches</span>
<div style="left:33px;top:878px;width:42px;height:16px;background:#f0f0f0;"></div>
<span class="t" style="left:35.6px;top:873px;font-size:15.5px;line-height:20px;color:#000;letter-spacing:0.11px;">Units</span>
<div style="left:504px;top:885px;width:105px;height:24px;border:1px solid #adadad;background:#e1e1e1;"></div>
<div style="left:505px;top:886px;width:105px;height:24px;overflow:hidden;">
<span class="t" style="left:-10.2px;top:3px;font-size:15.5px;line-height:20px;color:#000;letter-spacing:0.29px;">Wizard Options...</span>
</div>
<div style="left:796px;top:885px;width:82px;height:22px;border:2px solid #0078d7;background:#e1e1e1;"></div>
<span class="t" style="left:828.3px;top:889px;font-size:15.5px;line-height:20px;color:#000;transform:scaleX(0.9147);">OK</span>
<div style="left:896px;top:885px;width:84px;height:24px;border:1px solid #adadad;background:#e1e1e1;"></div>
<span class="t" style="left:916.4px;top:889px;font-size:15.5px;line-height:20px;color:#000;transform:scaleX(0.9455);">Cancel</span>
<div style="left:996px;top:885px;width:84px;height:24px;border:1px solid #adadad;background:#e1e1e1;"></div>
<span class="t" style="left:1022.6px;top:889px;font-size:15.5px;line-height:20px;color:#000;letter-spacing:0.24px;">Help</span>
</body></html>
